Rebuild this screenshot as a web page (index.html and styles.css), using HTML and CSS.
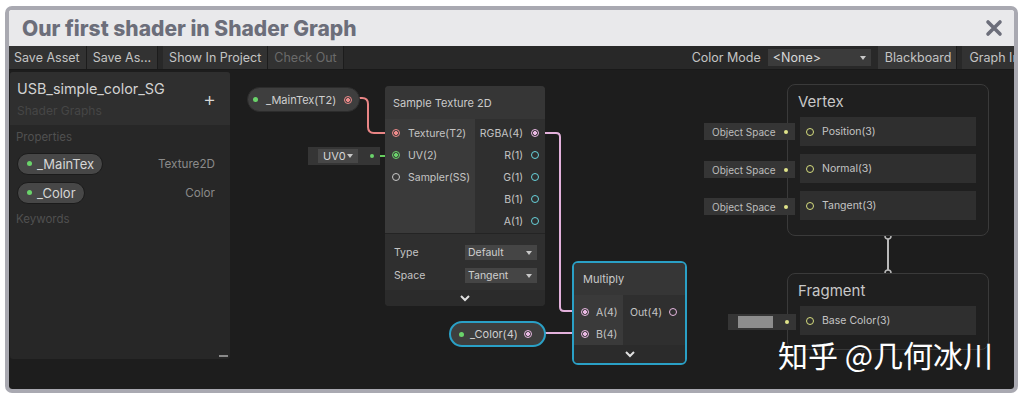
FILE: index.html
```html
<!DOCTYPE html>
<html lang="en">
<head>
  <meta charset="UTF-8">
  <meta name="viewport" content="width=device-width, initial-scale=1.0">
  <title>Our first shader in Shader Graph</title>
  <link rel="stylesheet" href="styles.css">
</head>
<body>
  <div class="window">
    <div class="titlebar">
      <h1>Our first shader in Shader Graph</h1>
      <svg class="close" viewBox="0 0 18 18" width="18" height="18">
        <path d="M3 3 L15 15 M15 3 L3 15" stroke="#6c6e7a" stroke-width="3.6" stroke-linecap="round"/>
      </svg>
    </div>

    <div class="toolbar">
      <button class="tb-btn first">Save Asset</button>
      <button class="tb-btn">Save As...</button>
      <span class="tb-gap"></span>
      <button class="tb-btn">Show In Project</button>
      <button class="tb-btn disabled">Check Out</button>
      <span class="tb-spacer"></span>
      <span class="tb-label">Color Mode</span>
      <div class="tb-select">&lt;None&gt;<span class="caret"></span></div>
      <button class="tb-btn lit">Blackboard</button>
      <button class="tb-btn last">Graph Inspector</button>
    </div>

    <div class="graph">
      <!-- wires sit under the nodes -->
      <svg class="wires" width="1005" height="319">
        <path d="M334 28 H353 Q359 28 359 34 V57 Q359 63 365 63 H387" stroke="#e98585" />
        <path d="M530 63 H547 Q551 63 551 67 V237 Q551 241 555 241 H575" stroke="#e3b1dc" />
        <path d="M522 263 H575" stroke="#e3b1dc" />
        <path d="M363 86 H387" stroke="#66cc5e" />
        <path d="M777 62 H801" stroke="#cdd678" />
        <path d="M777 100 H801" stroke="#cdd678" />
        <path d="M777 137 H801" stroke="#cdd678" />
        <path d="M777 252 H801" stroke="#cdd678" />
        <path d="M879 166 V203" stroke="#b9b9b9" />
        <circle cx="879" cy="166" r="3" fill="#1d1d1d" stroke="#b9b9b9" stroke-width="1.5" />
        <circle cx="879" cy="203" r="3" fill="#1d1d1d" stroke="#b9b9b9" stroke-width="1.5" />
      </svg>

      <div class="blackboard">
        <div class="bb-head">
          <div>
            <div class="bb-title">USB_simple_color_SG</div>
            <div class="bb-sub">Shader Graphs</div>
          </div>
          <span class="bb-add">+</span>
        </div>
        <div class="bb-section">Properties</div>
        <div class="bb-prop">
          <span class="bb-pill"><i class="dot"></i>_MainTex</span>
          <span class="bb-type">Texture2D</span>
        </div>
        <div class="bb-prop">
          <span class="bb-pill"><i class="dot"></i>_Color</span>
          <span class="bb-type">Color</span>
        </div>
        <div class="bb-section">Keywords</div>
        <span class="bb-resize"></span>
      </div>

      <!-- property nodes -->
      <div class="prop-node maintex">
        <i class="dot"></i><span>_MainTex(T2)</span><i class="port on tex"></i>
      </div>
      <div class="prop-node color selected">
        <i class="dot"></i><span>_Color(4)</span><i class="port on v4"></i>
      </div>

      <div class="uv-field">
        <span class="mini-select">UV0<span class="caret"></span></span>
        <i class="dot v2"></i>
      </div>

      <!-- Sample Texture 2D -->
      <div class="node sample">
        <div class="node-title">Sample Texture 2D</div>
        <div class="node-ports">
          <div class="ins">
            <div class="in"><i class="port on tex"></i>Texture(T2)</div>
            <div class="in"><i class="port on v2"></i>UV(2)</div>
            <div class="in"><i class="port ss"></i>Sampler(SS)</div>
          </div>
          <div class="outs">
            <div class="out">RGBA(4)<i class="port on v4"></i></div>
            <div class="out">R(1)<i class="port v1"></i></div>
            <div class="out">G(1)<i class="port v1"></i></div>
            <div class="out">B(1)<i class="port v1"></i></div>
            <div class="out">A(1)<i class="port v1"></i></div>
          </div>
        </div>
        <div class="node-settings">
          <div class="setting"><span>Type</span><span class="select">Default<span class="caret"></span></span></div>
          <div class="setting"><span>Space</span><span class="select">Tangent<span class="caret"></span></span></div>
        </div>
        <div class="node-foot">
          <svg width="12" height="8" viewBox="0 0 12 8"><path d="M2 2 L6 6 L10 2" fill="none" stroke="#e0e0e0" stroke-width="2"/></svg>
        </div>
      </div>

      <!-- Multiply -->
      <div class="node multiply selected">
        <div class="node-title">Multiply</div>
        <div class="node-ports">
          <div class="ins">
            <div class="in"><i class="port on v4"></i>A(4)</div>
            <div class="in"><i class="port on v4"></i>B(4)</div>
          </div>
          <div class="outs">
            <div class="out">Out(4)<i class="port v4"></i></div>
          </div>
        </div>
        <div class="node-foot">
          <svg width="12" height="8" viewBox="0 0 12 8"><path d="M2 2 L6 6 L10 2" fill="none" stroke="#e0e0e0" stroke-width="2"/></svg>
        </div>
      </div>

      <!-- master stack -->
      <div class="context vertex">
        <div class="ctx-title">Vertex</div>
        <div class="ctx-blocks">
          <div class="block"><i class="port v3"></i>Position(3)</div>
          <div class="block"><i class="port v3"></i>Normal(3)</div>
          <div class="block"><i class="port v3"></i>Tangent(3)</div>
        </div>
      </div>
      <div class="context fragment">
        <div class="ctx-title">Fragment</div>
        <div class="ctx-blocks">
          <div class="block small"><i class="port v3"></i>Base Color(3)</div>
        </div>
      </div>

      <div class="space-field" style="top: 53px;">Object Space<i class="dot v3"></i></div>
      <div class="space-field" style="top: 91px;">Object Space<i class="dot v3"></i></div>
      <div class="space-field" style="top: 128px;">Object Space<i class="dot v3"></i></div>
      <div class="swatch-field"><span class="swatch"></span><i class="dot v3"></i></div>

      <div class="watermark">知乎 @几何冰川</div>
    </div>
  </div>
</body>
</html>
```

FILE: styles.css
```css
* {
  margin: 0;
  padding: 0;
  box-sizing: border-box;
}

body {
  font-family: Inter, "Noto Sans", sans-serif;
  background-color: #ffffff;
  width: 1024px;
  height: 398px;
  overflow: hidden;
}

.window {
  margin: 6px 0 0 5px;
  width: 1013px;
  height: 387px;
  border: 4px solid #a9a9b1;
  border-radius: 7px;
  overflow: hidden;
  display: flex;
  flex-direction: column;
}

/* title */
.titlebar {
  height: 36px;
  background-color: #e9e9eb;
  display: flex;
  align-items: center;
  justify-content: space-between;
  padding: 0 11px 0 13px;
}

.titlebar h1 {
  font-size: 21px;
  font-weight: 800;
  color: #6c6e7a;
}

/* toolbar */
.toolbar {
  height: 24px;
  background-color: #282828;
  border-bottom: 1px solid #191919;
  display: flex;
  align-items: stretch;
  font-size: 12.5px;
  color: #c4c4c4;
  white-space: nowrap;
  overflow: hidden;
}

.tb-btn {
  background-color: #323232;
  border: none;
  border-right: 1px solid #1c1c1c;
  color: inherit;
  font: inherit;
  padding: 0 6px;
  flex-shrink: 0;
}

.tb-btn.first {
  padding-left: 5px;
}

.tb-btn.disabled {
  color: #6a6a6a;
}

.tb-btn.lit {
  background-color: #383838;
  padding: 0 5px 0 7px;
}

.tb-btn.last {
  margin-left: 5px;
  padding-left: 7px;
}

.tb-gap {
  width: 5px;
  flex-shrink: 0;
}

.tb-spacer {
  width: 348px;
  flex-shrink: 0;
}

.tb-label {
  display: flex;
  align-items: center;
  padding-right: 7px;
  flex-shrink: 0;
}

.tb-select {
  width: 103px;
  flex-shrink: 0;
  margin: 3px 7px 3px 0;
  background-color: #3b3b3b;
  padding: 0 5px;
  display: flex;
  align-items: center;
  justify-content: space-between;
  color: #d8d8d8;
}

.caret {
  width: 0;
  height: 0;
  border-left: 3.5px solid transparent;
  border-right: 3.5px solid transparent;
  border-top: 4px solid #c8c8c8;
}

/* graph canvas */
.graph {
  flex: 1;
  position: relative;
  background-color: #1d1d1d;
  overflow: hidden;
  color: #c4c4c4;
  font-size: 10.5px;
}

.wires {
  position: absolute;
  left: 0;
  top: 0;
}

.wires path {
  fill: none;
  stroke-width: 2;
}

/* blackboard */
.blackboard {
  position: absolute;
  left: 1px;
  top: 2px;
  width: 220px;
  height: 287px;
  background-color: #272727;
  border-radius: 3px;
}

.bb-head {
  height: 53px;
  background-color: #2f2f2f;
  display: flex;
  justify-content: space-between;
  align-items: center;
  padding: 0 14px 0 7px;
  border-radius: 3px 3px 0 0;
}

.bb-title {
  font-size: 14.4px;
  color: #d2d2d2;
  line-height: 19px;
}

.bb-sub {
  font-size: 12px;
  color: #464646;
  margin-top: 5px;
}

.bb-add {
  font-size: 20px;
  color: #d8d8d8;
  font-weight: 300;
}

.bb-section {
  font-size: 11.5px;
  color: #505050;
  padding: 5px 6px;
  height: 24px;
}

.bb-prop {
  height: 29px;
  display: flex;
  align-items: center;
  justify-content: space-between;
  padding: 0 15px 0 7px;
}

.bb-pill {
  height: 22px;
  display: flex;
  align-items: center;
  gap: 5px;
  padding: 0 8px 0 9px;
  background-color: #474747;
  border: 1px solid #1b1b1b;
  border-radius: 11px;
  font-size: 13px;
  color: #d6d6d6;
}

.bb-type {
  font-size: 11.7px;
  color: #8a8a8a;
}

.bb-resize {
  position: absolute;
  right: 2px;
  bottom: 2px;
  width: 9px;
  height: 2px;
  background-color: #8a8a8a;
}

.dot {
  width: 5px;
  height: 5px;
  border-radius: 50%;
  background-color: #6ad36a;
  flex-shrink: 0;
}

.dot.v2 {
  background-color: #6ad36a;
}

.dot.v3 {
  background-color: #dfe38a;
  width: 4px;
  height: 4px;
}

/* ports */
.port {
  --c: #bbbbbb;
  width: 8px;
  height: 8px;
  border-radius: 50%;
  border: 1.5px solid var(--c);
  flex-shrink: 0;
}

.port.on {
  background: radial-gradient(circle, var(--c) 0 1.6px, transparent 2.2px);
}

.port.tex { --c: #ee8a8a; }
.port.v1 { --c: #68d3dc; }
.port.v2 { --c: #6ad36a; }
.port.v3 { --c: #d6dd7e; }
.port.v4 { --c: #e8b8e2; }
.port.ss { --c: #c8c8c8; }

/* property nodes on the canvas */
.prop-node {
  position: absolute;
  display: flex;
  align-items: center;
  background-color: #3e3e3e;
  border: 1px solid #2c2c2c;
  border-radius: 13px;
  color: #cfcfcf;
  font-size: 11px;
}

.prop-node.maintex {
  left: 238px;
  top: 17px;
  width: 113px;
  height: 25px;
  padding: 0 12px 0 5px;
  gap: 8px;
}

.prop-node.color {
  left: 440px;
  top: 251px;
  width: 97px;
  height: 26px;
  padding: 0 13px 0 8px;
  gap: 6px;
}

.prop-node .port {
  margin-left: auto;
}

.selected {
  border: 2px solid #2aa0c6;
}

.uv-field {
  position: absolute;
  left: 299px;
  top: 77px;
  width: 72px;
  height: 18px;
  background-color: #353535;
  display: flex;
  align-items: center;
  padding-left: 10px;
}

.mini-select {
  width: 40px;
  height: 14px;
  background-color: #474747;
  display: flex;
  align-items: center;
  justify-content: space-between;
  padding: 0 5px;
  color: #d6d6d6;
  font-size: 11px;
}

.uv-field .dot {
  margin-left: auto;
  margin-right: 6px;
  width: 4px;
  height: 4px;
}

/* nodes */
.node {
  position: absolute;
  background-color: #2f2f2f;
  border-radius: 4px;
  overflow: hidden;
}

.node.sample {
  left: 376px;
  top: 16px;
  width: 160px;
}

.node-title {
  height: 33px;
  background-color: #363636;
  display: flex;
  align-items: center;
  padding-left: 8px;
  font-size: 11px;
  color: #cacaca;
}

.node-ports {
  display: flex;
  height: 114px;
}

.ins {
  width: 90px;
  background-color: #3a3a3a;
  padding-top: 3px;
}

.outs {
  flex: 1;
  background-color: #2f2f2f;
  padding-top: 3px;
}

.in,
.out {
  height: 22px;
  display: flex;
  align-items: center;
}

.in {
  padding-left: 7px;
  gap: 8px;
}

.out {
  justify-content: flex-end;
  padding-right: 6px;
  gap: 8px;
}

.node-settings {
  border-top: 1px solid #242424;
  height: 57px;
  padding-top: 7px;
}

.setting {
  height: 23px;
  display: flex;
  align-items: center;
  justify-content: space-between;
  padding: 0 8px 0 9px;
}

.select {
  width: 72px;
  height: 15px;
  background-color: #454545;
  display: flex;
  align-items: center;
  justify-content: space-between;
  padding: 0 5px 0 3px;
  font-size: 10.5px;
  color: #cfcfcf;
}

.node-foot {
  height: 16px;
  background-color: #2b2b2b;
  display: flex;
  align-items: center;
  justify-content: center;
}

.node.multiply {
  left: 563px;
  top: 191px;
  width: 115px;
  border-radius: 6px;
}

.multiply .node-title {
  height: 32px;
  padding-left: 9px;
}

.multiply .node-ports {
  height: 50px;
}

.multiply .ins {
  width: 49px;
  padding-top: 6px;
}

.multiply .outs {
  padding-top: 6px;
}

.multiply .in {
  gap: 7px;
}

.multiply .out {
  padding-right: 8px;
  gap: 7px;
}

.multiply .node-foot {
  height: 18px;
}

/* master stack contexts */
.context {
  position: absolute;
  left: 778px;
  width: 202px;
  border: 1px solid #3a3a3a;
  border-radius: 8px;
  background-color: #1f1f1f;
}

.context.vertex {
  top: 14px;
  height: 152px;
}

.context.fragment {
  top: 203px;
  height: 77px;
}

.ctx-title {
  height: 32px;
  display: flex;
  align-items: center;
  padding-left: 10px;
  font-size: 15px;
  color: #c8c8c8;
}

.ctx-blocks {
  display: flex;
  flex-direction: column;
  gap: 8px;
  padding-left: 12px;
}

.block {
  width: 176px;
  height: 29px;
  background-color: #2f2f2f;
  display: flex;
  align-items: center;
  padding-left: 6px;
  gap: 8px;
  font-size: 10.5px;
  color: #c4c4c4;
}

.block.small {
  font-size: 10.5px;
}

.space-field {
  position: absolute;
  left: 695px;
  width: 91px;
  height: 17px;
  background-color: #353535;
  display: flex;
  align-items: center;
  padding: 0 7px 0 8px;
  font-size: 10px;
  color: #bdbdbd;
}

.space-field .dot,
.swatch-field .dot {
  margin-left: auto;
}

.swatch-field {
  position: absolute;
  left: 719px;
  top: 244px;
  width: 68px;
  height: 16px;
  background-color: #353535;
  display: flex;
  align-items: center;
  padding: 0 7px 0 10px;
}

.swatch {
  width: 35px;
  height: 12px;
  background-color: #8d8d8d;
}

.watermark {
  position: absolute;
  left: 769px;
  top: 266px;
  font-family: "Noto Sans CJK SC", sans-serif;
  font-size: 30px;
  line-height: 36px;
  color: #ffffff;
  white-space: nowrap;
}
```
